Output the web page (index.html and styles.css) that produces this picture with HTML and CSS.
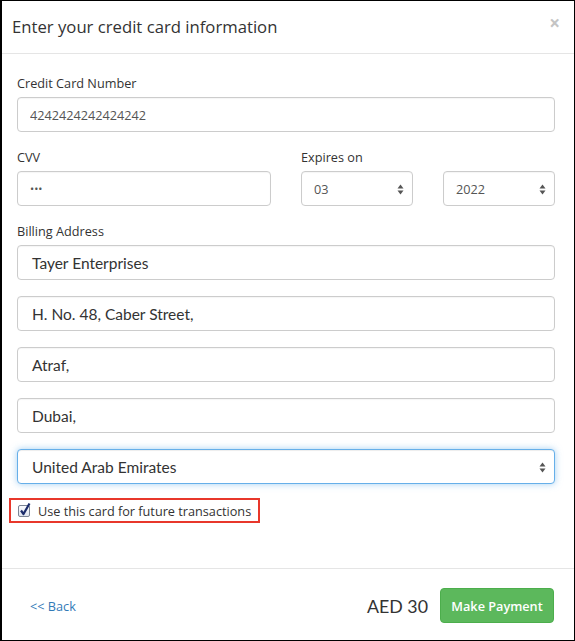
FILE: index.html
```html
<!DOCTYPE html>
<html>
<head>
<meta charset="utf-8">
<link rel="stylesheet" href="styles.css">
</head>
<body>
<div class="modal">
  <div class="modal-header">
    <h4 class="modal-title">Enter your credit card information</h4>
    <span class="close">×</span>
  </div>
  <div class="modal-body">
    <div class="form-group">
      <label class="lbl">Credit Card Number</label>
      <input class="ctrl" type="text" value="4242424242424242">
    </div>
    <div class="row">
      <div class="form-group">
        <label class="lbl">CVV</label>
        <div class="ctrl dots">•••</div>
      </div>
      <div class="form-group">
        <label class="lbl">Expires on</label>
        <div class="sel ctrl">03<svg class="arrows" width="7" height="11" viewBox="0 0 7 11"><path d="M3.5 0.5L6.5 4.5H0.5Z M3.5 10.5L6.5 6.5H0.5Z" fill="#555"/></svg></div>
      </div>
      <div class="form-group">
        <label class="lbl lbl-hidden">&nbsp;</label>
        <div class="sel ctrl">2022<svg class="arrows" width="7" height="11" viewBox="0 0 7 11"><path d="M3.5 0.5L6.5 4.5H0.5Z M3.5 10.5L6.5 6.5H0.5Z" fill="#555"/></svg></div>
      </div>
    </div>
    <div class="form-group addr">
      <label class="lbl">Billing Address</label>
      <div class="ctrl big">Tayer Enterprises</div>
      <div class="ctrl big">H. No. 48, Caber Street,</div>
      <div class="ctrl big">Atraf,</div>
      <div class="ctrl big">Dubai,</div>
      <div class="sel ctrl big focus">United Arab Emirates<svg class="arrows" width="7" height="11" viewBox="0 0 7 11"><path d="M3.5 0.5L6.5 4.5H0.5Z M3.5 10.5L6.5 6.5H0.5Z" fill="#555"/></svg></div>
    </div>
    <div class="check-row">
      <span class="cbox"><svg width="14" height="15" viewBox="0 0 14 15"><path d="M3 8.5L5.5 12L11.5 1.5" fill="none" stroke="#1c2d6b" stroke-width="2.2" stroke-linejoin="round"/></svg></span>
      <span class="check-text">Use this card for future transactions</span>
    </div>
  </div>
  <div class="modal-footer">
    <a class="back" href="#">&lt;&lt; Back</a>
    <div class="pay">
      <span class="amount">AED 30</span>
      <button class="btn">Make Payment</button>
    </div>
  </div>
</div>
</body>
</html>
```
FILE: styles.css
```css
* { box-sizing: border-box; }
html, body { margin: 0; padding: 0; background: #fff; }
body { font-family: "Open Sans", "Liberation Sans", sans-serif; color: #333; }
.modal {
  width: 575px;
  height: 641px;
  border: 1px solid #000;
  border-left-width: 2px;
  display: flex;
  flex-direction: column;
  background: #fff;
}
.modal-header {
  height: 53px;
  border-bottom: 1px solid #e5e5e5;
  display: flex;
  align-items: center;
  justify-content: space-between;
  padding: 0 14px 2px 10px;
  flex: none;
}
.modal-title {
  margin: 0;
  font-size: 16.7px;
  font-weight: 400;
  color: #333;
}
.close {
  font-size: 19px;
  font-weight: 700;
  color: #c4c4c4;
  line-height: 1;
  margin-top: -6px;
}
.modal-body {
  flex: 1;
  padding: 19px 19px 0 15px;
}
.form-group { margin-bottom: 15px; }
.lbl {
  display: block;
  font-size: 12.7px;
  line-height: 20px;
  margin-bottom: 4px;
  color: #333;
}
.ctrl {
  display: flex;
  align-items: center;
  width: 100%;
  height: 35px;
  border: 1px solid #ccc;
  border-radius: 4px;
  padding: 0 12px;
  font-family: "Open Sans", "Liberation Sans", sans-serif;
  font-size: 12.7px;
  color: #555;
  background: #fff;
  box-shadow: inset 0 1px 1px rgba(0,0,0,.04);
  margin: 0;
  outline: none;
}
.dots { font-size: 11px; letter-spacing: 0; color: #555; }
.row {
  display: grid;
  grid-template-columns: calc(50% - 15px) 1fr 1fr;
  column-gap: 30px;
}
.sel { position: relative; justify-content: flex-start; }
.arrows { position: absolute; right: 8px; top: 12px; }
.addr .big { margin-bottom: 16px; }
.addr .big:last-child { margin-bottom: 0; }
.big {
  font-family: Lato, "Liberation Sans", sans-serif;
  font-size: 15.5px;
  color: #333;
  padding-left: 14px;
}
.focus {
  border-color: #66afe9;
  box-shadow: inset 0 1px 1px rgba(0,0,0,.075), 0 0 7px rgba(102,175,233,.6);
}
.addr { margin-bottom: 14px; }
.check-row {
  display: inline-flex;
  align-items: center;
  margin-left: -8px;
  width: 251px;
  height: 25px;
  border: 2px solid #e8372b;
  padding-left: 7px;
}
.cbox {
  position: relative;
  width: 12px;
  height: 12px;
  border: 1px solid #7b8494;
  border-radius: 2px;
  background: linear-gradient(#fbfcfe, #dfe4ee);
  margin-right: 8px;
}
.cbox svg { position: absolute; left: -1px; top: -4px; }
.check-text { font-size: 12.7px; color: #333; }
.modal-footer {
  flex: none;
  height: 72px;
  border-top: 1px solid #e5e5e5;
  display: flex;
  align-items: center;
  justify-content: space-between;
  padding: 2px 20px 0 28px;
}
.back {
  color: #337ab7;
  text-decoration: none;
  font-size: 12.7px;
}
.pay { display: flex; align-items: center; gap: 12px; }
.amount {
  font-family: Lato, "Liberation Sans", sans-serif;
  font-size: 17.8px;
  color: #333;
}
.btn {
  height: 35px;
  width: 114px;
  border: 1px solid #4cae4c;
  border-radius: 4px;
  background: #5cb85c;
  color: #fff;
  font-family: "Open Sans", "Liberation Sans", sans-serif;
  font-weight: 600;
  font-size: 12.7px;
  padding: 0;
}
```
